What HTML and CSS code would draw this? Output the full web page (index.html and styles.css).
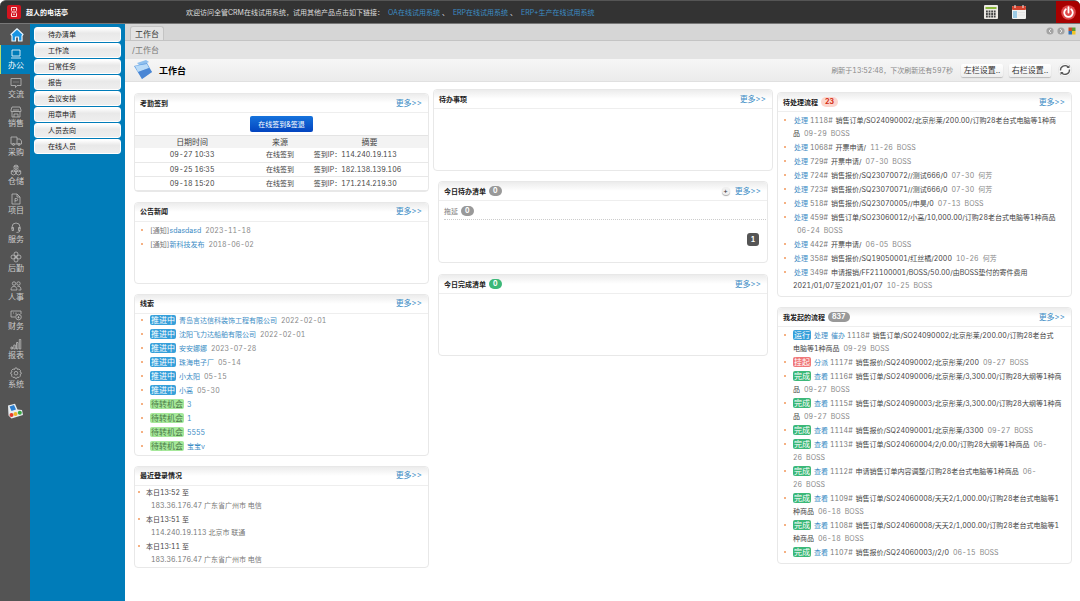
FILE: index.html
```html
<!DOCTYPE html>
<html lang="zh-CN">
<head>
    <meta charset="UTF-8">
    <meta name="viewport" content="width=device-width, initial-scale=1.0">
    <title>工作台</title>
    <link rel="stylesheet" href="styles.css">
</head>
<body>
    <header class="topbar">
        <svg class="brand-logo" viewBox="0 0 14 14">
            <rect width="14" height="14" rx="2" fill="#d3141f"/>
            <path d="M4.500 2.500h5v3L8.500 7l1 1.500v3h-5v-3L5.500 7l-1-1.500zM6 4.800h2M6 7h2M6 9.200h2" fill="none" stroke="#fbdcdc" stroke-width="1"/>
        </svg>
        <strong class="brand">超人的电话亭</strong>
        <p class="notice">欢迎访问全管CRM在线试用系统，试用其他产品点击如下链接：<a href="#">OA在线试用系统</a>、<a href="#">ERP在线试用系统</a>、<a href="#">ERP+生产在线试用系统</a></p>
        <div class="tools">
            <button class="tool" aria-label="计算器">
                <svg viewBox="0 0 14 14"><rect width="14" height="14" rx="1" fill="#ece9e4"/><rect x="1.500" y="2" width="11" height="2" fill="#8ab83c"/><path d="M2 6.500h10M2 9h10M2 11.500h10" stroke="#444" stroke-width="1.800" stroke-dasharray="1.800 .8"/></svg>
            </button>
            <button class="tool" aria-label="日历">
                <svg viewBox="0 0 14 14"><rect y="1" width="14" height="13" rx="1" fill="#f1f1ef"/><rect y="1" width="14" height="4" rx="1" fill="#d3432f"/><path d="M3 0v3M11 0v3" stroke="#eee"/><rect x="1" y="6" width="4" height="7" fill="#9ccbe4"/><path d="M6 7.500h7M6 10h7" stroke="#ddd" stroke-width=".6"/></svg>
            </button>
        </div>
        <button class="power" aria-label="退出">
            <svg viewBox="0 0 14 14"><circle cx="7" cy="7" r="6.800" fill="#e0474a"/><path d="M4.500 4a4 4 0 1 0 5 0M7 2v5" fill="none" stroke="#fff" stroke-width="1.700" stroke-linecap="round"/></svg>
        </button>
    </header>

    <div class="layout">
        <nav class="sidebar">
            <a class="home" href="#" aria-label="首页">
                <svg viewBox="0 0 14 14"><path d="M7 .8 13 6.500l-1 1.300V13H8.500V9h-3v4H2V7.800L1 6.500z" fill="#1793e2" stroke="#e8f5ff" stroke-width="1.200" stroke-linejoin="round"/></svg>
            </a>
            <a class="nav-item active" href="#"><svg viewBox="0 0 12 12"><path d="M2 2h8v6H2zM1 10h10"/></svg>办公</a>
            <a class="nav-item" href="#"><svg viewBox="0 0 12 12"><path d="M1 1.500h10v7H7L5.500 10.500V8.500H1zM3.500 5h1M5.500 5h1M7.500 5h1"/></svg>交流</a>
            <a class="nav-item" href="#"><svg viewBox="0 0 12 12"><path d="M2 1h8l1 3v1.500H1V4zM2 6v5h8V6M4 5.500V3M6 5.500V3M8 5.500V3M4 11V8h4v3"/></svg>销售</a>
            <a class="nav-item" href="#"><svg viewBox="0 0 12 12"><path d="M1 2h6v7H1zM7 4h3l1.500 2v3H7"/><circle cx="3.500" cy="9.500" r="1"/><circle cx="9" cy="9.500" r="1"/></svg>采购</a>
            <a class="nav-item" href="#"><svg viewBox="0 0 12 12"><path d="M6 1l2 1v2.500L6 5.500l-2-1V2zM3.500 6l2.200 1v3l-2.200 1-2.200-1V7zM8.500 6l2.200 1v3l-2.200 1-2.200-1V7zM4 2l2 1 2-1M6 3v2.500M1.300 7l2.200 1 2.200-1M6.300 7l2.200 1 2.200-1"/></svg>仓储</a>
            <a class="nav-item" href="#"><svg viewBox="0 0 12 12"><path d="M2 1h5l3 3v7H2zM7 1v3h3M5 9.500V5.500h1.500a1 1 0 0 1 0 2.200H5"/></svg>项目</a>
            <a class="nav-item" href="#"><svg viewBox="0 0 12 12"><path d="M2 7V5a4 4 0 0 1 8 0v2M2 5.500h1.500v3H2zM8.500 5.500H10v3H8.500zM10 8.500Q10 10.500 6.500 10.500"/></svg>服务</a>
            <a class="nav-item" href="#"><svg viewBox="0 0 12 12"><circle cx="6" cy="3" r="2"/><circle cx="3" cy="6" r="2"/><circle cx="9" cy="6" r="2"/><circle cx="6" cy="9" r="2"/><path d="M4.500 4.500l3 3M7.500 4.500l-3 3"/></svg>后勤</a>
            <a class="nav-item" href="#"><svg viewBox="0 0 12 12"><circle cx="4" cy="3.500" r="1.700"/><circle cx="8.500" cy="3.500" r="1.700"/><path d="M1 10c0-5 6-5 6 0zM7.500 6.500c2-.8 3.500.5 3.500 3.500H8.500"/></svg>人事</a>
            <a class="nav-item" href="#"><svg viewBox="0 0 12 12"><path d="M5 8H1V2h10v3M3 4h1M6 3.500v2"/><circle cx="8.500" cy="8" r="2.800"/><path d="M7.500 6.500l1 1 1-1M8.500 7.500v2M7.500 8.500h2"/></svg>财务</a>
            <a class="nav-item" href="#"><svg viewBox="0 0 12 12"><path d="M1 9h1.500v2H1zM3.800 7h1.500v4H3.800zM6.500 4.500H8V11H6.500zM9.300 1.500h1.500V11H9.300z"/></svg>报表</a>
            <a class="nav-item" href="#"><svg viewBox="0 0 12 12"><path d="M5 1h2l.5 1.500L9 2l1.500 1.500L10 5l1.200.5v1.500L10 7.500l.5 1.500L9 10.500 7.500 10 7 11.200H5L4.500 10 3 10.500 1.500 9 2 7.500.8 7V5.500L2 5l-.5-1.500L3 2l1.500.5z"/><circle cx="6" cy="6.200" r="1.800"/></svg>系统</a>
            <a class="apps" href="#" aria-label="应用">
                <svg viewBox="0 0 16 16"><path d="M1 2.500 8 .8l2.500 5.700 4.500.5 1 5-11.500 3.500-3-3z" fill="#e8edf0"/><path d="M2.500 3.500 7 2l2 4.500L4.500 8z" fill="#2c7fd0"/><circle cx="4.500" cy="12" r="2" fill="#e23b2c"/><circle cx="8.500" cy="11" r="2" fill="#f0b428"/><circle cx="12.800" cy="9.800" r="2" fill="#36a642"/></svg>
            </a>
        </nav>

        <nav class="submenu">
            <a href="#">待办清单</a>
            <a href="#">工作流</a>
            <a href="#">日常任务</a>
            <a href="#">报告</a>
            <a href="#">会议安排</a>
            <a href="#">用章申请</a>
            <a href="#">人员去向</a>
            <a href="#">在线人员</a>
        </nav>

        <main class="main">
            <div class="tabs">
                <a class="tab" href="#">工作台</a>
                <div class="tab-tools">
                    <svg viewBox="0 0 8 8"><circle cx="4" cy="4" r="3.600" fill="#a4a4a4"/><path d="M5 2 3 4l2 2" fill="none" stroke="#e5e5e5"/></svg>
                    <svg viewBox="0 0 8 8"><circle cx="4" cy="4" r="3.600" fill="#a4a4a4"/><path d="M3 2l2 2-2 2" fill="none" stroke="#e5e5e5"/></svg>
                    <svg viewBox="0 0 8 8"><path d="M.5.5H4V4H.5z" fill="#c84a28"/><path d="M4 .5h3.500V4H4z" fill="#5a9a34"/><path d="M.5 4H4v3.500H.5z" fill="#2d70b8"/><path d="M4 4h3.500v3.500H4z" fill="#f0c428"/></svg>
                </div>
            </div>
            <div class="crumb">/工作台</div>
            <div class="titlebar">
                <svg class="title-icon" viewBox="0 0 20 20"><path d="M4 3 13 0l3 2-9 4z" fill="#8fc0ee"/><path d="M1 6 14 3l5 9-10 7z" fill="#5c9be0"/><path d="M2 6 14 4l2 4L5 12z" fill="#b9dbf8"/><path d="M5 12l11-4 3 4-10 7z" fill="#3d78cc" opacity=".6"/></svg>
                <h1>工作台</h1>
                <span class="refresh-info">刷新于13:52:48，下次刷新还有597秒</span>
                <button class="setting">左栏设置..</button>
                <button class="setting">右栏设置..</button>
                <button class="refresh" aria-label="刷新">
                    <svg viewBox="0 0 14 14"><circle cx="7" cy="7" r="6.500" fill="#fafafa" stroke="#ddd" stroke-width=".6"/><path d="M2.500 7.500a4.500 4.500 0 0 1 7.500-3.700M11.500 6.500A4.500 4.500 0 0 1 4 10.200" fill="none" stroke="#555" stroke-width="1.300"/><path d="M8.500 5h3V2zM5.500 9h-3v3z" fill="#555"/></svg>
                </button>
            </div>

            <div class="board">
                <div class="column left">
                    <section class="card attendance">
                        <div class="card-head"><h2>考勤签到</h2><a class="more" href="#">更多&gt;&gt;</a></div>
                        <button class="sign">在线签到&amp;签退</button>
                        <table>
                            <thead>
                                <tr><th class="time">日期时间</th><th class="source">来源</th><th>摘要</th></tr>
                            </thead>
                            <tbody>
                                <tr><td>09-27 10:33</td><td>在线签到</td><td class="ip">签到IP：114.240.19.113</td></tr>
                                <tr><td>09-25 16:35</td><td>在线签到</td><td class="ip">签到IP：182.138.139.106</td></tr>
                                <tr><td>09-18 15:20</td><td>在线签到</td><td class="ip">签到IP：171.214.219.30</td></tr>
                            </tbody>
                        </table>
                    </section>

                    <section class="card">
                        <div class="card-head"><h2>公告新闻</h2><a class="more" href="#">更多&gt;&gt;</a></div>
                        <ul class="list news">
                            <li>[通知]<a href="#">sdasdasd</a><span class="date">2023-11-18</span></li>
                            <li>[通知]<a href="#">新科技发布</a><span class="date">2018-06-02</span></li>
                        </ul>
                    </section>

                    <section class="card">
                        <div class="card-head"><h2>线索</h2><a class="more" href="#">更多&gt;&gt;</a></div>
                        <ul class="list leads">
                            <li><span class="tag blue">推进中</span><a href="#">青岛言达信科装饰工程有限公司</a><span class="date">2022-02-01</span></li>
                            <li><span class="tag blue">推进中</span><a href="#">沈阳飞力达船舶有限公司</a><span class="date">2022-02-01</span></li>
                            <li><span class="tag blue">推进中</span><a href="#">安安娜娜</a><span class="date">2023-07-28</span></li>
                            <li><span class="tag blue">推进中</span><a href="#">珠海电子厂</a><span class="date">05-14</span></li>
                            <li><span class="tag blue">推进中</span><a href="#">小太阳</a><span class="date">05-15</span></li>
                            <li><span class="tag blue">推进中</span><a href="#">小高</a><span class="date">05-30</span></li>
                            <li><span class="tag lime">待转机会</span><a href="#">3</a></li>
                            <li><span class="tag lime">待转机会</span><a href="#">1</a></li>
                            <li><span class="tag lime">待转机会</span><a href="#">5555</a></li>
                            <li><span class="tag lime">待转机会</span><a href="#">宝宝v</a></li>
                        </ul>
                    </section>

                    <section class="card">
                        <div class="card-head"><h2>最近登录情况</h2><a class="more" href="#">更多&gt;&gt;</a></div>
                        <ul class="list logins">
                            <li>本日13:52 至<p>183.36.176.47 广东省广州市 电信</p></li>
                            <li>本日13:51 至<p>114.240.19.113 北京市 联通</p></li>
                            <li>本日13:11 至<p>183.36.176.47 广东省广州市 电信</p></li>
                        </ul>
                    </section>
                </div>

                <div class="column middle">
                    <section class="card">
                        <div class="card-head"><h2>待办事项</h2><a class="more" href="#">更多&gt;&gt;</a></div>
                    </section>
                    <div class="inner">
                        <section class="card">
                            <div class="card-head"><h2>今日待办清单</h2><span class="count">0</span><button class="add" aria-label="添加">+</button><a class="more" href="#">更多&gt;&gt;</a></div>
                            <div class="delay">拖延<span class="count">0</span></div>
                            <span class="page">1</span>
                        </section>
                        <section class="card">
                            <div class="card-head"><h2>今日完成清单</h2><span class="count done">0</span><a class="more" href="#">更多&gt;&gt;</a></div>
                        </section>
                    </div>
                </div>

                <div class="column right">
                    <section class="card">
                        <div class="card-head"><h2>待处理流程</h2><span class="count hot">23</span><a class="more" href="#">更多&gt;&gt;</a></div>
                        <ul class="list flows">
                            <li><a href="#">处理</a><i>1118#</i>销售订单/SO24090002/北京彤莱/200.00/订购28老台式电脑等1种商<br>品<span class="date">09-29</span><span class="who">BOSS</span></li>
                            <li><a href="#">处理</a><i>1068#</i>开票申请/<span class="date">11-26</span><span class="who">BOSS</span></li>
                            <li><a href="#">处理</a><i>729#</i>开票申请/<span class="date">07-30</span><span class="who">BOSS</span></li>
                            <li><a href="#">处理</a><i>724#</i>销售报价/SQ23070072//测试666/0<span class="date">07-30</span><span class="who">何芳</span></li>
                            <li><a href="#">处理</a><i>723#</i>销售报价/SQ23070071//测试666/0<span class="date">07-30</span><span class="who">何芳</span></li>
                            <li><a href="#">处理</a><i>518#</i>销售报价/SQ23070005//申昊/0<span class="date">07-13</span><span class="who">BOSS</span></li>
                            <li><a href="#">处理</a><i>459#</i>销售订单/SO23060012/小高/10,000.00/订购28老台式电脑等1种商品<br><span class="date">06-24</span><span class="who">BOSS</span></li>
                            <li><a href="#">处理</a><i>442#</i>开票申请/<span class="date">06-05</span><span class="who">BOSS</span></li>
                            <li><a href="#">处理</a><i>358#</i>销售报价/SQ19050001/红丝橘/2000<span class="date">10-26</span><span class="who">何芳</span></li>
                            <li><a href="#">处理</a><i>349#</i>申请报销/FF21100001/BOSS/50.00/由BOSS垫付的寄件费用<br>2021/01/07至2021/01/07<span class="date">10-25</span><span class="who">BOSS</span></li>
                        </ul>
                    </section>

                    <section class="card">
                        <div class="card-head"><h2>我发起的流程</h2><span class="count">837</span><a class="more" href="#">更多&gt;&gt;</a></div>
                        <ul class="list flows">
                            <li><span class="tag blue">运行</span><a href="#">处理</a><a href="#">催办</a><i>1118#</i>销售订单/SO24090002/北京彤莱/200.00/订购28老台式<br>电脑等1种商品<span class="date">09-29</span><span class="who">BOSS</span></li>
                            <li><span class="tag red">挂起</span><a href="#">分派</a><i>1117#</i>销售报价/SQ24090002/北京彤莱/200<span class="date">09-27</span><span class="who">BOSS</span></li>
                            <li><span class="tag green">完成</span><a href="#">查看</a><i>1116#</i>销售订单/SO24090006/北京彤莱/3,300.00/订购28大纲等1种商<br>品<span class="date">09-27</span><span class="who">BOSS</span></li>
                            <li><span class="tag green">完成</span><a href="#">查看</a><i>1115#</i>销售订单/SO24090003/北京彤莱/3,300.00/订购28大纲等1种商<br>品<span class="date">09-27</span><span class="who">BOSS</span></li>
                            <li><span class="tag green">完成</span><a href="#">查看</a><i>1114#</i>销售报价/SQ24090001/北京彤莱/3300<span class="date">09-27</span><span class="who">BOSS</span></li>
                            <li><span class="tag green">完成</span><a href="#">查看</a><i>1113#</i>销售订单/SO24060004/2/0.00/订购28大纲等1种商品<span class="date">06-<br>26</span><span class="who">BOSS</span></li>
                            <li><span class="tag green">完成</span><a href="#">查看</a><i>1112#</i>申请销售订单内容调整/订购28老台式电脑等1种商品<span class="date">06-<br>26</span><span class="who">BOSS</span></li>
                            <li><span class="tag green">完成</span><a href="#">查看</a><i>1109#</i>销售订单/SO24060008/天天2/1,000.00/订购28老台式电脑等1<br>种商品<span class="date">06-18</span><span class="who">BOSS</span></li>
                            <li><span class="tag green">完成</span><a href="#">查看</a><i>1108#</i>销售订单/SO24060008/天天2/1,000.00/订购28老台式电脑等1<br>种商品<span class="date">06-18</span><span class="who">BOSS</span></li>
                            <li><span class="tag green">完成</span><a href="#">查看</a><i>1107#</i>销售报价/SQ24060003//2/0<span class="date">06-15</span><span class="who">BOSS</span></li>
                        </ul>
                    </section>
                </div>
            </div>
        </main>
    </div>
</body>
</html>
```
FILE: styles.css
```css
* {
    box-sizing: border-box;
}
body {
    margin: 0;
    min-height: 100vh;
    display: flex;
    flex-direction: column;
    background-color: #fff;
    color: #444;
    font-family: Inter, "Noto Sans CJK SC", sans-serif;
    font-size: 7px;
    font-variant-numeric: tabular-nums;
    line-height: 13px;
}
a {
    color: #3c8dc5;
    text-decoration: none;
}
button {
    font-family: inherit;
    border: none;
    padding: 0;
    cursor: pointer;
}
svg {
    display: block;
}
h1, h2, p, ul {
    margin: 0;
    padding: 0;
}

/* top bar */
.topbar {
    display: flex;
    align-items: center;
    height: 24px;
    padding-left: 7px;
    background-color: #333;
    border-top: 1px solid #555;
    border-bottom: 1px solid #777;
    border-radius: 6px 6px 0 0;
    color: #ddd;
}
.brand-logo {
    width: 14px;
    height: 14px;
}
.brand {
    width: 165px;
    padding-left: 5px;
    font-size: 7px;
    color: #fff;
}
.notice {
    flex: 1;
}
.notice a {
    margin: 0 2px 0 4px;
}
.tools {
    display: flex;
    gap: 14px;
    margin-right: 30px;
}
.tool {
    width: 14px;
    background: none;
}
.power {
    display: flex;
    align-items: center;
    justify-content: center;
    width: 24px;
    height: 22px;
    background-color: #a80000;
    border-radius: 0 5px 0 0;
}
.power svg {
    width: 15px;
}

/* side navigation */
.layout {
    flex: 1;
    display: flex;
}
.sidebar {
    width: 30px;
    background-color: #545454;
}
.home {
    display: flex;
    justify-content: center;
    align-items: center;
    height: 21px;
    padding-left: 3px;
}
.home svg {
    width: 14px;
}
.nav-item {
    display: flex;
    flex-direction: column;
    align-items: center;
    height: 29px;
    padding-top: 3px;
    padding-left: 2px;
    font-size: 8px;
    line-height: 10px;
    color: #ccc;
}
.nav-item svg {
    width: 12px;
    height: 12px;
    fill: none;
    stroke: #bbb;
    stroke-width: 0.8;
}
.nav-item.active {
    background-color: #007cb9;
    border-left: 1px solid #b8dc6a;
    padding-left: 1px;
    color: #fff;
}
.nav-item.active svg {
    stroke: #fff;
}
.apps svg {
    width: 16px;
    margin: 10px 0 0 7px;
}
.submenu {
    display: flex;
    flex-direction: column;
    gap: 1px;
    width: 95px;
    padding: 3px 4px;
    background-color: #007cb9;
}
.submenu a {
    height: 15px;
    padding-left: 13px;
    border: 1px solid #fff;
    border-radius: 3px;
    background: linear-gradient(#fff, #e9e9e9 40%, #eee);
    font-size: 7px;
    color: #222;
}

/* tabs and title */
.main {
    flex: 1;
}
.tabs {
    display: flex;
    justify-content: space-between;
    height: 17px;
    padding: 2px 4px 0 5px;
    background-color: #d6d6d6;
    border-bottom: 1px solid #c4c4c4;
}
.tab {
    padding: 0 4px;
    border: 1px solid #c4c4c4;
    border-bottom: none;
    border-radius: 3px 3px 0 0;
    background-color: #e3e3e3;
    font-size: 8px;
    line-height: 14px;
    color: #333;
}
.tab-tools {
    display: flex;
    gap: 3px;
    padding-top: 1px;
}
.tab-tools svg {
    width: 8px;
    height: 8px;
}
.crumb {
    height: 18px;
    padding-left: 7px;
    background-color: #e3e3e3;
    font-size: 8px;
    line-height: 19px;
    color: #777;
}
.titlebar {
    display: flex;
    align-items: center;
    height: 23px;
    padding: 0 8px;
    background: linear-gradient(#f6f6f6, #ebebeb);
    border-bottom: 1px solid #e0e0e0;
}
.title-icon {
    width: 20px;
    height: 20px;
}
h1 {
    flex: 1;
    padding-left: 6px;
    font-size: 9px;
    color: #000;
}
.refresh-info {
    font-size: 7px;
    color: #888;
}
.setting {
    width: 42px;
    height: 13px;
    margin-left: 8px;
    background: linear-gradient(#fff, #eee);
    border-radius: 2px;
    box-shadow: 0 1px 1px #bbb;
    font-size: 8px;
    line-height: 13px;
    color: #333;
}
.setting + .setting {
    margin-left: 6px;
}
.refresh {
    width: 14px;
    margin-left: 7px;
    background: none;
}

/* cards */
.board {
    display: grid;
    grid-template-columns: 295fr 340fr 295fr;
    gap: 4px;
    padding: 0 8px 0 9px;
}
.column {
    display: flex;
    flex-direction: column;
    gap: 10px;
    min-width: 0;
}
.left {
    padding-top: 11px;
}
.middle {
    padding-top: 7px;
}
.right {
    padding-top: 10px;
}
.inner {
    display: flex;
    flex-direction: column;
    gap: 11px;
    padding: 0 5px;
}
.card {
    min-height: 82px;
    border: 1px solid #e8e8e8;
    border-radius: 4px;
    background-color: #fff;
}
.card-head {
    display: flex;
    align-items: center;
    height: 19px;
    padding: 0 6px 0 5px;
    border-bottom: 1px solid #eee;
    border-radius: 4px 4px 0 0;
    background: linear-gradient(#ececec, #fff 50%);
}
h2 {
    font-size: 7px;
    color: #222;
}
.more {
    margin-left: auto;
    font-size: 8px;
}
.count {
    min-width: 12px;
    margin-left: 3px;
    padding: 0 4px;
    border-radius: 5px;
    background-color: #999;
    font-size: 7px;
    font-weight: bold;
    line-height: 10px;
    color: #fff;
    text-align: center;
}
.count.done {
    background-color: #3cb878;
}
.count.hot {
    background-color: #fcd5cd;
    color: #d42a10;
}
.add {
    width: 8px;
    height: 8px;
    margin-left: auto;
    border-radius: 50%;
    background-color: #f0f0f0;
    box-shadow: 0 1px 1px #aaa;
    font-size: 7px;
    line-height: 8px;
    color: #333;
}
.add + .more {
    margin-left: 5px;
}
.delay {
    display: flex;
    align-items: center;
    height: 19px;
    margin: 0 1px 0 5px;
    padding-top: 2px;
    border-bottom: 1px dotted #ccc;
    font-size: 7px;
    color: #777;
}
.page {
    display: block;
    width: 12px;
    margin: 13px 8px 0 auto;
    border-radius: 3px;
    background-color: #555;
    font-weight: bold;
    color: #fff;
    text-align: center;
}

/* attendance */
.sign {
    display: block;
    width: 63px;
    height: 16px;
    margin: 3px auto;
    border-radius: 2px;
    background: linear-gradient(#1673dc, #0344c0);
    font-size: 7px;
    color: #fff;
}
table {
    width: 100%;
    border-collapse: collapse;
    border-top: 1px solid #e4e4e4;
    text-align: center;
}
th {
    padding: 0;
    background-color: #f3f3f3;
    font-size: 8px;
    font-weight: normal;
    line-height: 12px;
}
td {
    padding: 0;
    height: 14px;
    border-bottom: 1px solid #e8e8e8;
}
.time {
    width: 39%;
}
.source {
    width: 21%;
}
.ip {
    padding-left: 3px;
    text-align: left;
}

/* lists */
.list {
    padding: 2px 3px 3px 15px;
    list-style: none;
    white-space: nowrap;
}
.list li {
    position: relative;
    margin-bottom: 1px;
}
.list li::before {
    content: "";
    position: absolute;
    left: -9px;
    top: 5px;
    width: 2px;
    height: 2px;
    background-color: #f5b183;
}
.date, .who {
    margin-left: 4px;
    color: #888;
}
.news {
    color: #777;
}
.leads {
    padding-top: 0;
    padding-bottom: 1px;
}
.leads a {
    margin-left: 3px;
}
.flows a {
    margin: 0 2px 0 1px;
}
.flows .tag + a {
    margin-left: 3px;
}
.flows i {
    margin-right: 3px;
    font-style: normal;
    color: #777;
}
.tag {
    display: inline-block;
    padding: 0 1px;
    border-radius: 2px;
    font-size: 8px;
    line-height: 10px;
    color: #fff;
}
.blue {
    background-color: #37a0da;
}
.red {
    background-color: #f07878;
}
.green {
    background-color: #3cb878;
}
.lime {
    background-color: #a5e89a;
    color: #4d7a48;
}
.logins {
    padding-top: 0;
    padding-bottom: 0;
    padding-left: 11px;
}
.logins li::before {
    left: -8px;
}
.logins p {
    padding-left: 5px;
    color: #777;
}
```
